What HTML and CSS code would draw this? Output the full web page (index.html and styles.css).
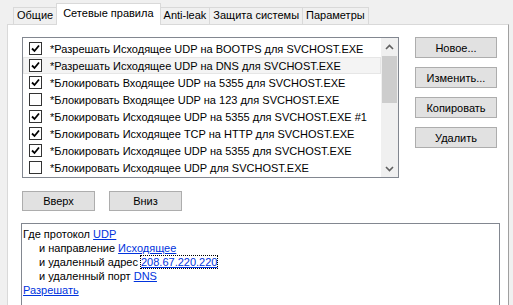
FILE: index.html
```html
<!DOCTYPE html>
<html lang="ru">
<head>
  <meta charset="UTF-8">
  <title>Сетевые правила</title>
  <link rel="stylesheet" href="styles.css">
</head>
<body>
  <div class="tabs">
    <div class="tab">Общие</div>
    <div class="tab active">Сетевые правила</div>
    <div class="tab">Anti-leak</div>
    <div class="tab">Защита системы</div>
    <div class="tab">Параметры</div>
  </div>

  <div class="page">
    <div class="top-row">
      <div class="rule-list">
        <div class="rows">
          <div class="row"><span class="check on"></span>*Разрешать Исходящее UDP на BOOTPS для SVCHOST.EXE</div>
          <div class="row hover"><span class="check on"></span>*Разрешать Исходящее UDP на DNS для SVCHOST.EXE</div>
          <div class="row"><span class="check on"></span>*Блокировать Входящее UDP на 5355 для SVCHOST.EXE</div>
          <div class="row"><span class="check"></span>*Блокировать Входящее UDP на 123 для SVCHOST.EXE</div>
          <div class="row"><span class="check on"></span>*Блокировать Исходящее UDP на 5355 для SVCHOST.EXE #1</div>
          <div class="row"><span class="check on"></span>*Блокировать Исходящее TCP на HTTP для SVCHOST.EXE</div>
          <div class="row"><span class="check on"></span>*Блокировать Исходящее UDP на 5355 для SVCHOST.EXE</div>
          <div class="row"><span class="check"></span>*Блокировать Исходящее UDP для SVCHOST.EXE</div>
        </div>
        <div class="scrollbar">
          <div class="arrow">
            <svg width="9" height="6" viewBox="0 0 9 6"><path d="M1 5 L4.5 1.5 L8 5" fill="none" stroke="#606060" stroke-width="1.6"/></svg>
          </div>
          <div class="track"><div class="thumb"></div></div>
          <div class="arrow">
            <svg width="9" height="6" viewBox="0 0 9 6"><path d="M1 1 L4.5 4.5 L8 1" fill="none" stroke="#606060" stroke-width="1.6"/></svg>
          </div>
        </div>
      </div>

      <div class="side-buttons">
        <button>Новое...</button>
        <button>Изменить...</button>
        <button>Копировать</button>
        <button>Удалить</button>
      </div>
    </div>

    <div class="move-buttons">
      <button>Вверх</button>
      <button>Вниз</button>
    </div>

    <div class="rule-text">
      <div>Где протокол <a href="#">UDP</a></div>
      <div class="sub">и направление <a href="#">Исходящее</a></div>
      <div class="sub">и удаленный адрес <a href="#" class="focused">208.67.220.220</a></div>
      <div class="sub">и удаленный порт <a href="#">DNS</a></div>
      <div><a href="#">Разрешать</a></div>
    </div>
  </div>
</body>
</html>
```

FILE: styles.css
```css
body {
  margin: 0;
  background: #f0f0f0;
  font-family: 'Liberation Sans', Arial, sans-serif;
  font-size: 11px;
  color: #000;
  height: 305px;
  overflow: hidden;
}

.tabs {
  display: flex;
  align-items: flex-end;
  height: 24px;
  padding-left: 13px;
}

.tab {
  height: 16px;
  line-height: 15px;
  padding: 0 3px;
  background: #f0f0f0;
  border: 1px solid #d9d9d9;
  border-bottom: none;
  margin-left: -1px;
}

.tab:first-child {
  margin-left: 0;
}

.tab.active {
  position: relative;
  height: 21px;
  line-height: 19px;
  padding: 0 6px;
  background: #fff;
  margin-bottom: -1px;
  z-index: 1;
}

.page {
  margin: 0 4px 0 7px;
  height: 281px;
  background: #fff;
  border: 1px solid #d9d9d9;
  border-right-color: #a0a0a0;
  border-bottom: none;
  padding: 12px 0 0 14px;
  box-sizing: border-box;
  overflow: hidden;
}

.top-row {
  display: flex;
  gap: 16px;
}

.rule-list {
  display: flex;
  width: 375px;
  height: 139px;
  border: 1px solid #828790;
  background: #fff;
}

.rows {
  flex: 1;
  padding-top: 2px;
}

.row {
  display: flex;
  align-items: center;
  height: 17px;
  padding-left: 6px;
  box-sizing: border-box;
  white-space: nowrap;
}

.row.hover {
  background: #f4f4f4;
  border: 1px solid #e6e6e6;
  padding-left: 5px;
}

.check {
  width: 11px;
  height: 11px;
  border: 1px solid #333;
  background: #fff;
  margin-right: 8px;
  flex-shrink: 0;
}

.check.on {
  background: #fff url("data:image/svg+xml;utf8,<svg xmlns='http://www.w3.org/2000/svg' width='11' height='11'><path d='M2 5.5 L4.5 8 L9 2.5' fill='none' stroke='black' stroke-width='1.8'/></svg>") no-repeat center;
}

.scrollbar {
  width: 17px;
  display: flex;
  flex-direction: column;
  background: #f0f0f0;
}

.arrow {
  height: 17px;
  display: flex;
  align-items: center;
  justify-content: center;
}

.track {
  flex: 1;
}

.thumb {
  height: 47px;
  margin: 1px 1px 0;
  background: #cdcdcd;
}

.side-buttons {
  display: flex;
  flex-direction: column;
  gap: 9px;
}

button {
  font-family: 'Liberation Sans', Arial, sans-serif;
  font-size: 11px;
  color: #000;
  background: #e1e1e1;
  border: 1px solid #adadad;
  border-radius: 0;
  padding: 0;
}

.side-buttons button {
  width: 82px;
  height: 21px;
}

.move-buttons {
  display: flex;
  gap: 14px;
  margin-top: 13px;
}

.move-buttons button {
  width: 73px;
  height: 20px;
}

.rule-text {
  width: 475px;
  height: 90px;
  margin: 12px 0 0 -1px;
  border: 1px solid #828790;
  border-bottom: none;
  padding: 3px 1px;
  line-height: 14px;
  box-sizing: content-box;
}

.rule-text .sub {
  padding-left: 16px;
}

.rule-text a {
  color: #0033dd;
  text-decoration: underline;
}

.rule-text a.focused {
  outline: 1px dotted #000;
}
```
